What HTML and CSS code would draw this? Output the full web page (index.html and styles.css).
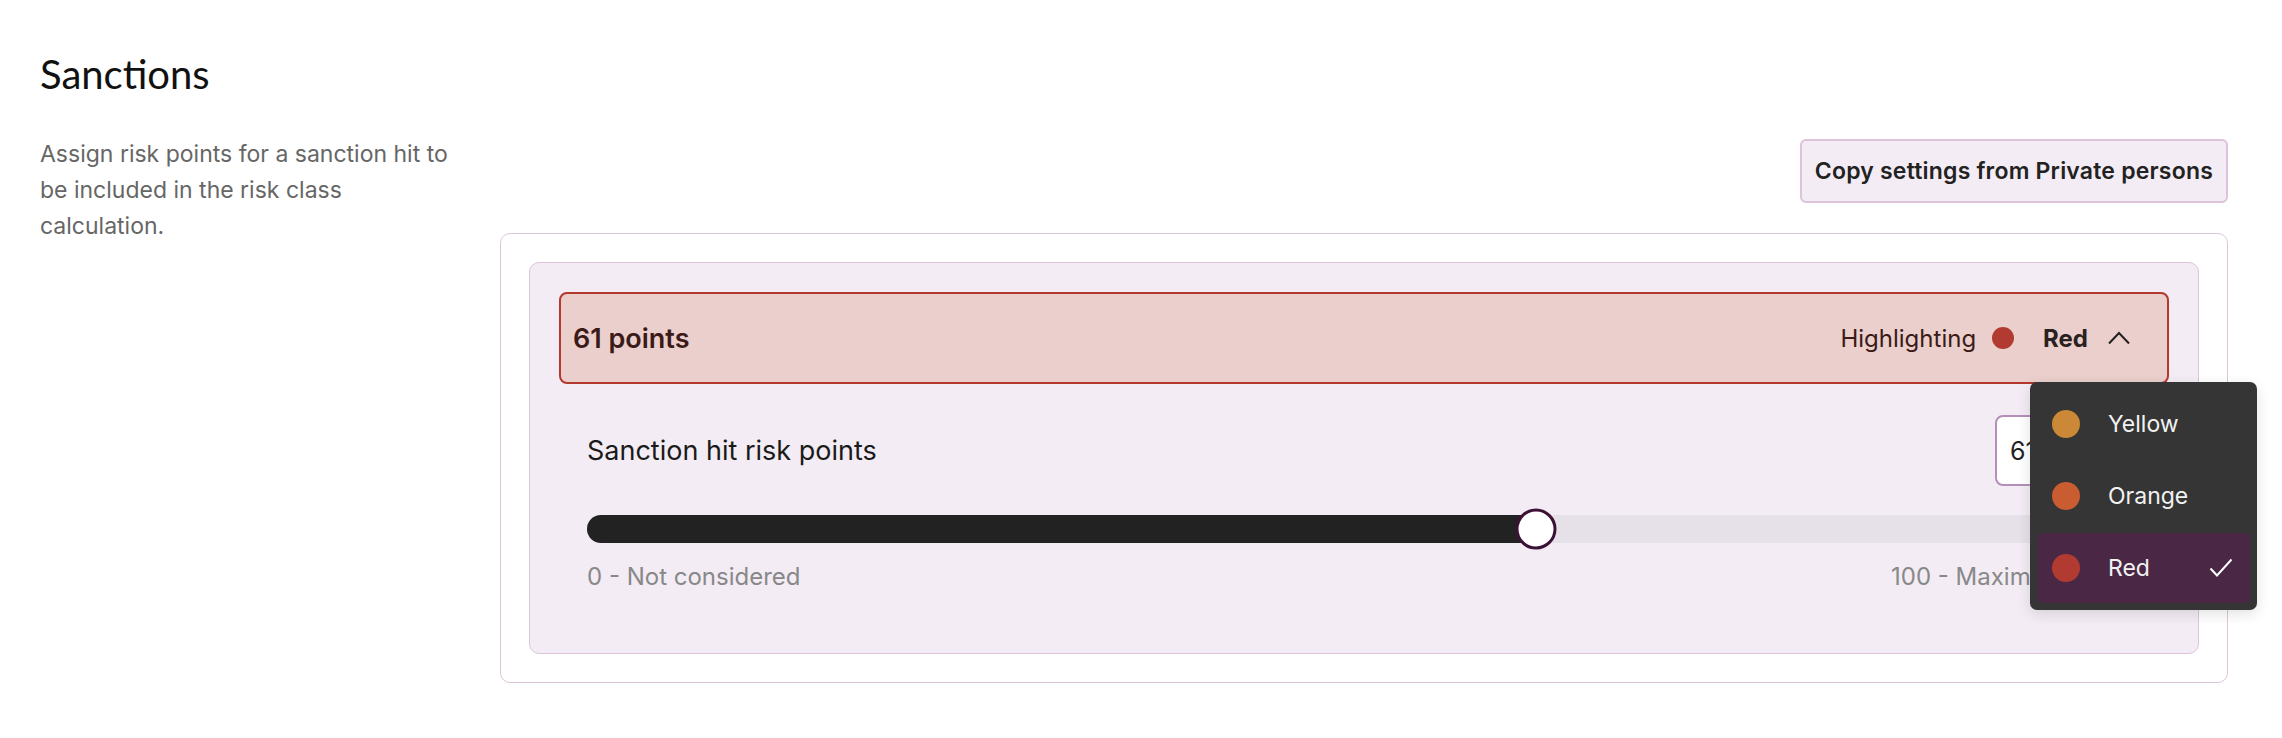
FILE: index.html
```html
<!DOCTYPE html>
<html lang="en">

<head>
    <meta charset="UTF-8">
    <meta name="viewport" content="width=device-width, initial-scale=1.0">
    <title>Risk settings</title>
    <link rel="stylesheet" href="styles.css">
</head>

<body>
    <section class="settings">
        <h2 class="settings-title">Sanctions</h2>

        <div class="settings-grid">
            <p class="settings-desc">Assign risk points for a sanction hit to be included in the risk class calculation.</p>

            <div class="settings-main">
                <div class="actions">
                    <button class="copy-btn">Copy settings from Private persons</button>
                </div>

                <div class="card">
                    <div class="panel">
                        <div class="level-bar">
                            <span class="level-points">61 points</span>

                            <div class="level-tag">
                                <span>Highlighting</span>
                                <span class="dot dot-red"></span>
                                <span class="level-name">Red</span>
                                <svg class="chevron" width="22" height="14" viewBox="0 0 22 14">
                                    <path d="M1 12.5 L11 2 L21 12.5" fill="none" stroke="#222" stroke-width="2" />
                                </svg>
                            </div>

                            <!-- colour picker, opened -->
                            <ul class="color-menu">
                                <li class="color-item">
                                    <span class="dot dot-lg dot-yellow"></span>
                                    <span>Yellow</span>
                                </li>
                                <li class="color-item">
                                    <span class="dot dot-lg dot-orange"></span>
                                    <span>Orange</span>
                                </li>
                                <li class="color-item selected">
                                    <span class="dot dot-lg dot-red"></span>
                                    <span>Red</span>
                                    <svg class="check" width="24" height="20" viewBox="0 0 24 20">
                                        <path d="M1.5 10.5 L8 17.5 L22.5 1.5" fill="none" stroke="#fff" stroke-width="2" />
                                    </svg>
                                </li>
                            </ul>
                        </div>

                        <div class="panel-body">
                            <div class="field-row">
                                <label for="points">Sanction hit risk points</label>
                                <input type="text" id="points" class="points-input" value="61">
                            </div>

                            <div class="slider">
                                <div class="slider-fill" style="width: 61%;"></div>
                                <div class="slider-thumb" style="left: 61%;"></div>
                            </div>

                            <div class="slider-scale">
                                <span>0 - Not considered</span>
                                <span>100 - Maximum points</span>
                            </div>
                        </div>
                    </div>
                </div>
            </div>
        </div>
    </section>
</body>

</html>
```

FILE: styles.css
```css
* {
    box-sizing: border-box;
}

body {
    margin: 0;
    background: white;
    color: #1a1a1a;
    font-family: "Inter", "Liberation Sans", sans-serif;
}

.settings {
    padding: 49px 54px 0 40px;
}

.settings-title {
    margin: 0;
    font-family: "Lato", sans-serif;
    font-size: 40px;
    font-weight: 400;
    line-height: 50px;
    color: #111;
}

.settings-grid {
    display: grid;
    grid-template-columns: 420px 1fr;
    column-gap: 40px;
    margin-top: 40px;
}

.settings-desc {
    margin: -3px 0 0;
    font-size: 23px;
    line-height: 36px;
    color: #666;
}

.actions {
    display: flex;
    justify-content: flex-end;
}

.copy-btn {
    height: 64px;
    padding: 0 13px;
    font-family: inherit;
    font-size: 23px;
    font-weight: 600;
    letter-spacing: 0.2px;
    color: #222;
    background-color: #f4ecf4;
    border: 2px solid #dcc2da;
    border-radius: 6px;
}

.card {
    margin-top: 30px;
    padding: 28px;
    border: 1px solid #dcc7da;
    border-radius: 10px;
}

.panel {
    padding: 29px;
    background-color: #f3ecf4;
    border: 1px solid #dcc4da;
    border-radius: 10px;
}

/* highlighted header of the level */
.level-bar {
    position: relative;
    display: flex;
    align-items: center;
    justify-content: space-between;
    height: 92px;
    padding: 0 37px 0 12px;
    background-color: #eacfcc;
    border: 2px solid #b3392f;
    border-radius: 8px;
    color: #3b1a17;
}

.level-points {
    font-size: 27px;
    font-weight: 600;
}

.level-tag {
    display: flex;
    align-items: center;
    font-size: 24px;
}

.level-name {
    margin-left: 29px;
    font-weight: 700;
    color: #2a2222;
}

.chevron {
    margin-left: 20px;
}

.dot {
    display: inline-block;
    width: 22px;
    height: 22px;
    margin-left: 16px;
    border-radius: 50%;
}

.dot-lg {
    width: 28px;
    height: 28px;
    margin-left: 0;
}

.dot-red {
    background-color: #b23b31;
}

.dot-orange {
    background-color: #c95c30;
}

.dot-yellow {
    background-color: #cb8836;
}

.color-menu {
    position: absolute;
    top: 88px;
    right: -90px;
    z-index: 10;
    display: flex;
    flex-direction: column;
    gap: 2px;
    width: 227px;
    margin: 0;
    padding: 7px;
    list-style: none;
    background-color: #353535;
    border-radius: 7px;
    box-shadow: 0 4px 14px rgba(0, 0, 0, 0.12);
}

.color-item {
    display: flex;
    align-items: center;
    gap: 28px;
    height: 70px;
    padding: 0 17px 0 15px;
    font-size: 23px;
    color: #f2f2f2;
    border-radius: 6px;
}

.color-item.selected {
    background-color: #4a2845;
}

.check {
    margin-left: auto;
}

.panel-body {
    padding: 31px 27px 31px 28px;
}

.field-row {
    display: flex;
    align-items: center;
    justify-content: space-between;
}

.field-row label {
    font-size: 27px;
    color: #1a1a1a;
}

.points-input {
    width: 147px;
    height: 71px;
    padding: 0 13px;
    font-family: inherit;
    font-size: 25px;
    color: #222;
    background: white;
    border: 2px solid #b58fba;
    border-radius: 8px;
}

.slider {
    position: relative;
    height: 28px;
    margin-top: 29px;
    background-color: #e6e0e8;
    border-radius: 14px;
}

.slider-fill {
    height: 100%;
    background-color: #222;
    border-radius: 14px 0 0 14px;
}

.slider-thumb {
    position: absolute;
    top: 50%;
    width: 41px;
    height: 41px;
    background: white;
    border: 3px solid #3b1236;
    border-radius: 50%;
    transform: translate(-50%, -50%);
}

.slider-scale {
    display: flex;
    justify-content: space-between;
    margin-top: 18px;
    font-size: 24px;
    line-height: 32px;
    color: #888;
}
```
